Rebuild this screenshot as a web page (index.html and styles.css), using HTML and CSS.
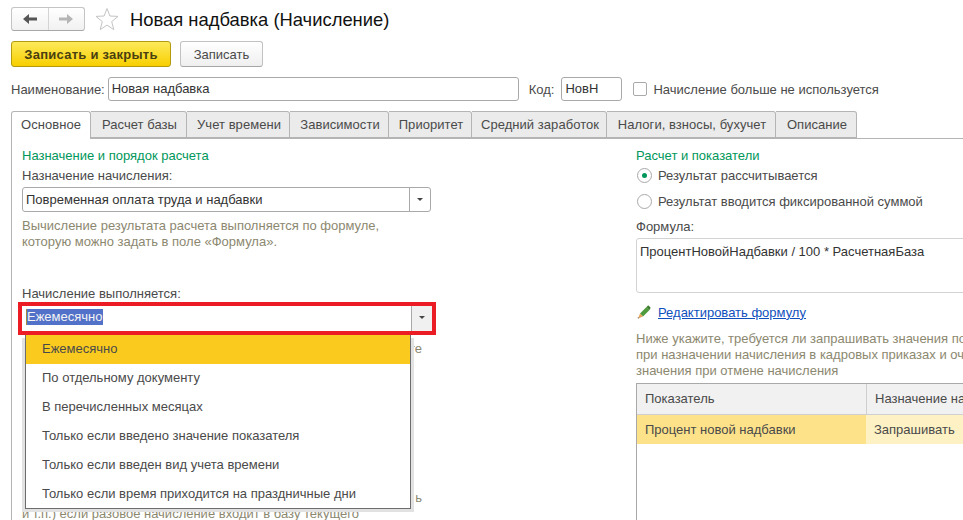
FILE: index.html
```html
<!DOCTYPE html>
<html lang="ru">
<head>
    <meta charset="UTF-8">
    <meta name="viewport" content="width=device-width, initial-scale=1.0">
    <title>Новая надбавка (Начисление)</title>
    <link rel="stylesheet" href="styles.css">
</head>
<body>
    <div class="page">
        <div class="title-row">
            <div class="nav-buttons">
                <button class="nav-btn">
                    <svg width="14" height="10" viewBox="0 0 14 10"><path d="M0 5 L6 0 V3.5 H14 V6.5 H6 V10 Z" fill="#555"/></svg>
                </button>
                <button class="nav-btn">
                    <svg width="14" height="10" viewBox="0 0 14 10"><path d="M14 5 L8 0 V3.5 H0 V6.5 H8 V10 Z" fill="#b5b5b5"/></svg>
                </button>
            </div>
            <svg class="star" width="24" height="24" viewBox="0 0 24 24"><path d="M12 1.5 L14.9 9 L23 9.4 L16.7 14.6 L18.8 22.6 L12 18.1 L5.2 22.6 L7.3 14.6 L1 9.4 L9.1 9 Z" fill="#fff" stroke="#c4c4c4"/></svg>
            <h1>Новая надбавка (Начисление)</h1>
        </div>

        <div class="command-bar">
            <button class="btn btn-primary">Записать и закрыть</button>
            <button class="btn">Записать</button>
        </div>

        <div class="field-row">
            <label>Наименование:</label>
            <div class="input name-input">Новая надбавка</div>
            <label class="code-label">Код:</label>
            <div class="input code-input">НовН</div>
            <span class="checkbox"></span>
            <label>Начисление больше не используется</label>
        </div>

        <div class="tabs">
            <div class="tab active">Основное</div>
            <div class="tab tab-w96">Расчет базы</div>
            <div class="tab tab-w103">Учет времени</div>
            <div class="tab tab-w99">Зависимости</div>
            <div class="tab tab-w83">Приоритет</div>
            <div class="tab tab-w135">Средний заработок</div>
            <div class="tab tab-w169">Налоги, взносы, бухучет</div>
            <div class="tab tab-w81">Описание</div>
        </div>

        <div class="panel">
            <div class="col-left">
                <div class="group-title">Назначение и порядок расчета</div>
                <div class="caption">Назначение начисления:</div>
                <div class="select">
                    <span class="select-text">Повременная оплата труда и надбавки</span>
                    <span class="select-arrow"></span>
                </div>
                <p class="hint hint-first">Вычисление результата расчета выполняется по формуле,<br>которую можно задать в поле «Формула».</p>
                <div class="caption caption-second">Начисление выполняется:</div>
                <div class="highlight">
                    <div class="select select-open">
                        <span class="select-text"><span class="selected-text">Ежемесячно</span></span>
                        <span class="select-arrow"></span>
                    </div>
                    <ul class="dropdown">
                        <li class="current">Ежемесячно</li>
                        <li>По отдельному документу</li>
                        <li>В перечисленных месяцах</li>
                        <li>Только если введено значение показателя</li>
                        <li>Только если введен вид учета времени</li>
                        <li>Только если время приходится на праздничные дни</li>
                    </ul>
                </div>
                <p class="hint hint-tail">те</p>
                <p class="hint hint-tail hint-tail-low">ь</p>
                <p class="hint">и т.п.) если разовое начисление входит в базу текущего</p>
            </div>

            <div class="col-right">
                <div class="group-title">Расчет и показатели</div>
                <div class="radio-row"><span class="radio radio-on"></span>Результат рассчитывается</div>
                <div class="radio-row"><span class="radio"></span>Результат вводится фиксированной суммой</div>
                <div class="caption formula-caption">Формула:</div>
                <div class="formula">ПроцентНовойНадбавки / 100 * РасчетнаяБаза</div>
                <div class="edit-link">
                    <svg width="14" height="14" viewBox="0 0 14 14">
                        <path d="M3 8.5 L9.5 2 L12.5 5 L6 11.5 Z" fill="#4f9a3c"/>
                        <path d="M9.5 2 L10.8 0.7 Q11.3 0.3 11.8 0.7 L13.4 2.4 Q13.7 2.9 13.4 3.3 L12.5 5 Z" fill="#3d7a2f"/>
                        <path d="M3 8.5 L6 11.5 L1 13.5 Z" fill="#e3a25a"/>
                        <path d="M1 13.5 L0.6 12 L2 12.9 Z" fill="#444"/>
                    </svg>
                    <a href="#">Редактировать формулу</a>
                </div>
                <p class="hint hint-right">Ниже укажите, требуется ли запрашивать значения показателей<br>при назначении начисления в кадровых приказах и очищать<br>значения при отмене начисления</p>
                <div class="table">
                    <div class="table-row table-head">
                        <div class="cell cell-first">Показатель</div>
                        <div class="cell cell-second">Назначение начисления</div>
                    </div>
                    <div class="table-row table-current">
                        <div class="cell cell-first">Процент новой надбавки</div>
                        <div class="cell cell-second">Запрашивать</div>
                    </div>
                </div>
            </div>
        </div>
    </div>
</body>
</html>
```

FILE: styles.css
```css
* {
    box-sizing: border-box;
}

html, body {
    margin: 0;
    height: 520px;
    overflow: hidden;
    background-color: #fff;
}

body {
    font-family: "Liberation Sans", Arial, sans-serif;
    font-size: 13px;
    color: #4a4a4a;
}

.page {
    width: 963px;
    height: 520px;
    padding: 7px 0 0 11px;
    overflow: hidden;
}

/* заголовок */
.title-row {
    display: flex;
    align-items: center;
    height: 24px;
}

.nav-buttons {
    display: flex;
    width: 74px;
    height: 24px;
    border: 1px solid #c4c4c4;
    border-bottom-color: #a8a8a8;
    border-radius: 3px;
    background: linear-gradient(#fff, #f1f1f1);
}

.nav-btn {
    flex: 1;
    display: flex;
    align-items: center;
    justify-content: center;
    padding: 0;
    background: none;
    border: none;
}

.nav-btn + .nav-btn {
    border-left: 1px solid #d4d4d4;
}

.star {
    margin-left: 10px;
}

h1 {
    margin: 2px 0 0 11px;
    font-size: 18.4px;
    font-weight: normal;
    color: #111;
}

/* кнопки */
.command-bar {
    display: flex;
    gap: 9px;
    margin-top: 10px;
}

.btn {
    height: 26px;
    width: 83px;
    padding: 0;
    font-family: inherit;
    font-size: 13px;
    color: #4a4a4a;
    border: 1px solid #c2c2c2;
    border-bottom-color: #a6a6a6;
    border-radius: 3px;
    background: linear-gradient(#fff, #efefef);
}

.btn-primary {
    width: 160px;
    font-weight: bold;
    letter-spacing: 0.25px;
    color: #4a3f10;
    border-color: #b39a10;
    background: linear-gradient(#fdea5c, #f8cf00);
}

/* поля */
.field-row {
    display: flex;
    align-items: center;
    height: 24px;
    margin-top: 10px;
}

.input {
    height: 24px;
    line-height: 22px;
    padding-left: 3px;
    color: #333;
    background-color: #fff;
    border: 1px solid #a9a9a9;
    border-radius: 3px;
}

.name-input {
    width: 411px;
    margin-left: 3px;
}

.code-label {
    margin-left: 10px;
}

.code-input {
    width: 61px;
    margin-left: 7px;
}

.checkbox {
    width: 14px;
    height: 14px;
    margin: 0 6px 0 11px;
    border: 1px solid #a9a9a9;
    border-radius: 2px;
}

/* вкладки */
.tabs {
    display: flex;
    height: 28px;
    margin-top: 10px;
    border-bottom: 1px solid #b4b4b4;
}

.tab {
    height: 27px;
    line-height: 26px;
    padding-left: 2px;
    text-align: center;
    letter-spacing: 0.05px;
    background-color: #ebebeb;
    border: 1px solid #b4b4b4;
    border-left: none;
    border-radius: 0 3px 0 0;
}

.tab.active {
    width: 80px;
    height: 28px;
    padding-left: 0;
    background-color: #fff;
    border-left: 1px solid #b4b4b4;
    border-bottom: none;
    border-radius: 3px 3px 0 0;
}

.tab-w96 { width: 96px; }
.tab-w103 { width: 103px; }
.tab-w99 { width: 99px; }
.tab-w83 { width: 83px; }
.tab-w135 { width: 135px; }
.tab-w169 { width: 169px; }
.tab-w81 { width: 81px; }

.panel {
    display: grid;
    grid-template-columns: 414px 500px;
    column-gap: 200px;
    height: 400px;
    padding: 9px 0 0 10px;
    border-left: 1px solid #b4b4b4;
}

.group-title {
    height: 16px;
    line-height: 16px;
    color: #00975b;
}

.caption {
    height: 16px;
    line-height: 16px;
    margin-top: 4px;
}

.hint {
    margin: 0;
    line-height: 16px;
    color: #8c8870;
}

/* левая колонка */
.select {
    display: flex;
    width: 409px;
    height: 25px;
    margin-top: 3px;
    background-color: #fff;
    border: 1px solid #a9a9a9;
    border-radius: 3px;
}

.select-text {
    flex: 1;
    line-height: 23px;
    padding-left: 3px;
    color: #333;
}

.select-arrow {
    position: relative;
    width: 21px;
    border-left: 1px solid #a9a9a9;
}

.select-arrow::after {
    content: "";
    position: absolute;
    left: 7px;
    top: 10px;
    border: 3px solid transparent;
    border-top: 3px solid #444;
}

.hint-first {
    margin-top: 6px;
}

.caption-second {
    margin-top: 36px;
}

.highlight {
    position: relative;
    width: 418px;
    height: 33px;
    margin: 0 0 0 -4px;
    border: 4px solid #ec1c24;
}

.select-open {
    width: 410px;
    height: 25px;
    margin: 0;
    border: none;
    border-radius: 0;
}

.select-open .select-text {
    line-height: 22px;
    padding-left: 4px;
}

.select-open .select-arrow {
    background-color: #f0f0f0;
}

.selected-text {
    display: inline-block;
    height: 16px;
    line-height: 16px;
    color: #f4f4f4;
    background-color: #5271c8;
    border-left: 1px solid #a58c3a;
}

.dropdown {
    position: absolute;
    left: 3px;
    top: 29px;
    width: 386px;
    height: 174px;
    margin: 0;
    padding: 0;
    list-style: none;
    background-color: #fff;
    border: 1px solid #6d6d6d;
    border-top: none;
    box-shadow: -3px 3px 0 #e2e2e2, 3px 3px 0 #e2e2e2;
}

.dropdown li {
    height: 29px;
    line-height: 28px;
    padding-left: 16px;
}

.dropdown .current {
    background-color: #facb1e;
}

.hint-tail {
    width: 400px;
    margin-top: 6px;
    text-align: right;
}

.hint-tail-low {
    margin-top: 133px;
    width: 400px;
}

/* правая колонка */
.radio-row {
    display: flex;
    align-items: center;
    height: 26px;
}

.group-title + .radio-row {
    margin-top: -2px;
}

.radio {
    position: relative;
    width: 15px;
    height: 15px;
    margin: 0 6px 0 1px;
    background-color: #fff;
    border: 1px solid #a9a9a9;
    border-radius: 50%;
}

.radio-on::after {
    content: "";
    position: absolute;
    left: 4px;
    top: 4px;
    width: 5px;
    height: 5px;
    border-radius: 50%;
    background-color: #00975b;
}

.formula-caption {
    margin-top: 5px;
}

.formula {
    height: 55px;
    margin-top: 3px;
    padding: 5px 3px;
    line-height: 16px;
    color: #333;
    border: 1px solid #d3d3d3;
    border-radius: 3px;
}

.edit-link {
    display: flex;
    align-items: center;
    gap: 7px;
    height: 16px;
    margin-top: 11px;
    padding-left: 1px;
}

.edit-link a {
    color: #0f4fbd;
}

.hint-right {
    margin-top: 11px;
}

.table {
    height: 160px;
    margin-top: 4px;
    border: 1px solid #a9a9a9;
    border-right: none;
}

.table-row {
    display: flex;
}

.table-head {
    height: 31px;
    line-height: 30px;
    background-color: #f1f1f1;
    border-bottom: 1px solid #cfcfcf;
}

.table-current {
    height: 29px;
    line-height: 29px;
}

.cell {
    padding-left: 8px;
}

.cell-first {
    width: 229px;
}

.cell-second {
    flex: 1;
}

.table-head .cell-second {
    border-left: 1px solid #cfcfcf;
}

.table-current .cell-first {
    background-color: #fde28a;
}

.table-current .cell-second {
    background-color: #fef2c4;
}
```
